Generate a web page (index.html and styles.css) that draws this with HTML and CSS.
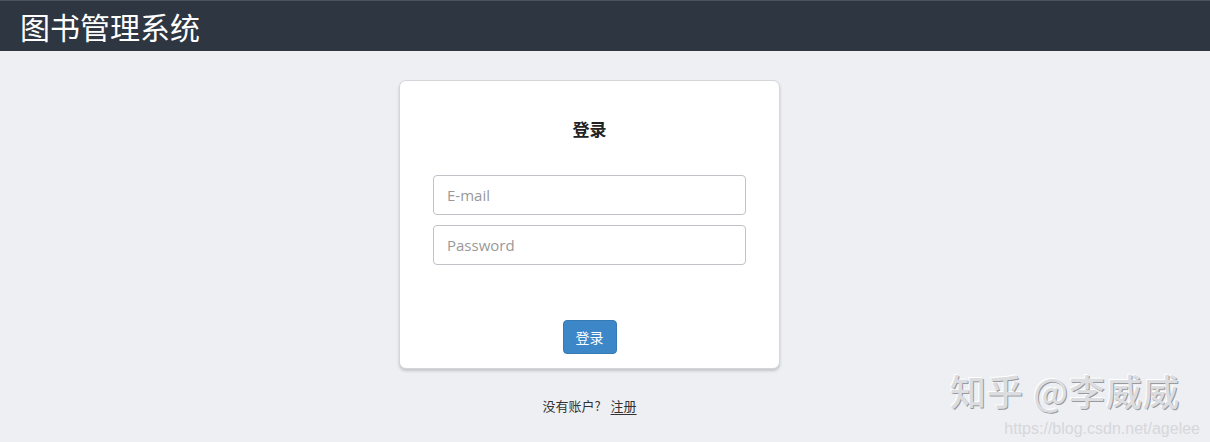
FILE: index.html
```html
<!DOCTYPE html>
<html lang="zh-CN">
<head>
  <meta charset="UTF-8" />
  <title>图书管理系统</title>
  <link rel="stylesheet" href="styles.css">
</head>
<body>
  <header class="topbar">
    <h1>图书管理系统</h1>
  </header>

  <main class="page">
    <div class="card">
      <h2>登录</h2>
      <form class="login-form">
        <input type="text" placeholder="E-mail" />
        <input type="password" placeholder="Password" />
        <button type="button">登录</button>
      </form>
    </div>
    <p class="signup">没有账户?<span class="gap"></span><a href="#">注册</a></p>
  </main>

  <div class="watermark">
    <div class="wm-main">知乎 @李威威</div>
    <div class="wm-url">https://blog.csdn.net/agelee</div>
  </div>
</body>
</html>
```

FILE: styles.css
```css
* {
  box-sizing: border-box;
}

body {
  margin: 0;
  background: #eeeff3;
  font-family: "Open Sans", "Noto Sans CJK SC", sans-serif;
  color: #333;
  height: 442px;
  overflow: hidden;
  position: relative;
}

.topbar {
  background: #2d3641;
  height: 51px;
  border-top: 1px solid #4a525c;
  padding-left: 20px;
  display: flex;
  align-items: center;
}

.topbar h1 {
  margin: 0;
  color: #fff;
  font-family: "Noto Sans CJK SC", sans-serif;
  font-weight: 400;
  font-size: 30px;
  line-height: 1;
}

.page {
  display: flex;
  flex-direction: column;
  align-items: center;
  padding-right: 31px;
  padding-top: 29px;
}

.card {
  width: 381px;
  height: 289px;
  background: #fff;
  border: 1px solid #d4d6da;
  border-radius: 7px;
  box-shadow: 0 2px 3px rgba(0, 0, 0, 0.18);
  padding: 35px 33px 0 33px;
  text-align: center;
}

.card h2 {
  margin: 0 0 33px;
  font-family: "Noto Sans CJK SC", sans-serif;
  font-size: 17px;
  font-weight: 700;
  line-height: 26px;
  color: #222;
}

.login-form {
  display: flex;
  flex-direction: column;
  align-items: center;
}

.login-form input {
  width: 100%;
  height: 40px;
  margin-bottom: 10px;
  padding: 0 13px;
  border: 1px solid #bfc2c6;
  border-radius: 4px;
  font-family: "Open Sans", sans-serif;
  font-size: 15px;
  color: #333;
}

.login-form input::placeholder {
  color: #999;
}

.login-form button {
  margin-top: 45px;
  width: 54px;
  height: 34px;
  background: #3d87c9;
  border: 1px solid #3579b5;
  border-radius: 4px;
  color: #fff;
  font-family: "Noto Sans CJK SC", sans-serif;
  font-size: 14px;
  padding: 0;
  cursor: pointer;
}

.signup {
  margin: 27px 0 0;
  font-family: "Noto Sans CJK SC", sans-serif;
  font-size: 13px;
  color: #333;
}

.signup .gap {
  display: inline-block;
  width: 10px;
}

.signup a {
  color: #333;
  text-decoration: underline;
  text-underline-offset: 3px;
}

.watermark {
  position: absolute;
  right: 10px;
  top: 364px;
  text-align: right;
}

.wm-main {
  font-family: "Noto Sans CJK SC", sans-serif;
  font-size: 36px;
  font-weight: 500;
  color: #dcdde0;
  text-shadow: 1px 1px 0 #9a9b9e, -1px -1px 0 #fff;
  letter-spacing: 1px;
  margin-right: 20px;
}

.wm-url {
  font-family: "Liberation Sans", sans-serif;
  font-size: 16px;
  color: #d6d7da;
  margin-top: 4px;
}
```
